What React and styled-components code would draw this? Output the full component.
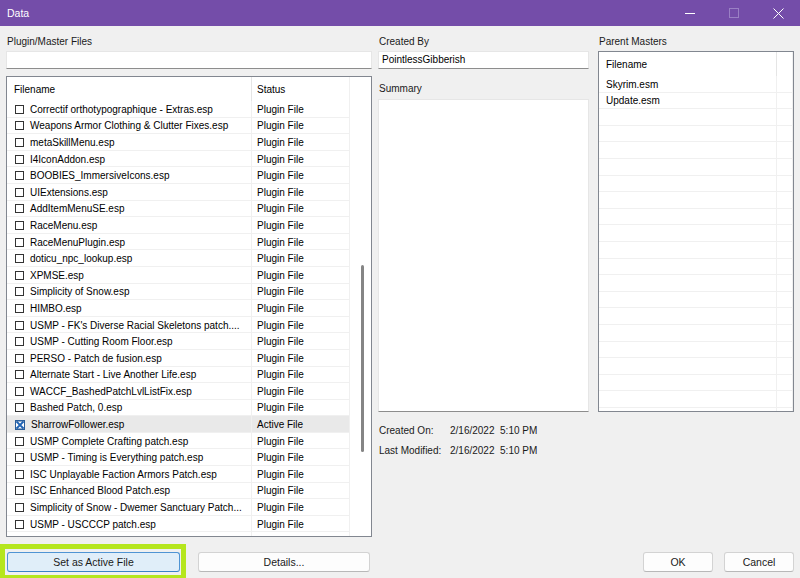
import React from "react";
import styled, { createGlobalStyle } from "styled-components";

const GlobalStyle = createGlobalStyle`
  html, body {
    margin: 0;
    padding: 0;
    background: #f0f0f0;
  }
  body {
    font-family: "Liberation Sans", Arial, sans-serif;
    font-size: 10px;
    color: #000;
  }
  * { box-sizing: border-box; }
`;

const plugins = [
  "Correctif orthotypographique - Extras.esp",
  "Weapons Armor Clothing & Clutter Fixes.esp",
  "metaSkillMenu.esp",
  "I4IconAddon.esp",
  "BOOBIES_ImmersiveIcons.esp",
  "UIExtensions.esp",
  "AddItemMenuSE.esp",
  "RaceMenu.esp",
  "RaceMenuPlugin.esp",
  "doticu_npc_lookup.esp",
  "XPMSE.esp",
  "Simplicity of Snow.esp",
  "HIMBO.esp",
  "USMP - FK's Diverse Racial Skeletons patch....",
  "USMP - Cutting Room Floor.esp",
  "PERSO - Patch de fusion.esp",
  "Alternate Start - Live Another Life.esp",
  "WACCF_BashedPatchLvlListFix.esp",
  "Bashed Patch, 0.esp",
  "SharrowFollower.esp",
  "USMP Complete Crafting patch.esp",
  "USMP - Timing is Everything patch.esp",
  "ISC Unplayable Faction Armors Patch.esp",
  "ISC Enhanced Blood Patch.esp",
  "Simplicity of Snow - Dwemer Sanctuary Patch...",
  "USMP - USCCCP patch.esp",
  "",
];

const ACTIVE = "SharrowFollower.esp";
const masters = ["Skyrim.esm", "Update.esm"];

// WINDOW FRAME
const Window = styled.div`
  width: 800px;
  height: 578px;
  background: #f0f0f0;
  overflow: hidden;
  display: flex;
  flex-direction: column;
`;

const TitleBar = styled.div`
  height: 26px;
  flex-shrink: 0;
  background: #744da9;
  color: #fff;
  display: flex;
  align-items: center;
  padding-left: 7px;
  font-size: 10.5px;
`;

const Caption = styled.div`
  flex: 1;
`;

const CaptionButton = styled.div`
  width: 44px;
  height: 26px;
  display: flex;
  align-items: center;
  justify-content: center;
`;

const MinGlyph = styled.div`
  width: 10px;
  height: 1px;
  background: #fff;
`;

const MaxGlyph = styled.div`
  width: 10px;
  height: 10px;
  border: 1px solid #9a80c4;
`;

// BODY
const Body = styled.div`
  display: flex;
  padding: 9px 6px 0 6px;
`;

const Column = styled.div`
  width: ${(p) => p.$width}px;
  margin-left: ${(p) => p.$offset || 0}px;
  display: flex;
  flex-direction: column;
`;

const Label = styled.div`
  height: 14px;
  line-height: 14px;
  padding-left: 1px;
  color: #1a1a1a;
  margin-top: ${(p) => p.$top || 0}px;
`;

const TextBox = styled.div`
  margin-top: 2px;
  height: 18px;
  background: #fff;
  border: 1px solid #e6e6e6;
  border-bottom-color: #8d8d8d;
  padding-left: 3px;
  line-height: 16px;
`;

const SummaryBox = styled.div`
  margin-top: 3px;
  height: 313px;
  background: #fff;
  border: 1px solid #e6e6e6;
  border-bottom-color: #8d8d8d;
`;

const InfoGrid = styled.div`
  margin-top: 9px;
  display: grid;
  grid-template-columns: 71px auto;
  line-height: 20px;
  padding-left: 1px;
  color: #1a1a1a;
  white-space: pre;
`;

// LIST VIEWS
const ListBox = styled.div`
  margin-top: ${(p) => p.$top}px;
  height: ${(p) => p.$height}px;
  background: #fff;
  border: 1px solid #828790;
  display: flex;
  overflow: hidden;
`;

const Table = styled.div`
  width: ${(p) => p.$width}px;
  flex-shrink: 0;
  display: flex;
  flex-direction: column;
  border-right: 1px solid #f0f0f0;
`;

const HeaderRow = styled.div`
  height: 24px;
  flex-shrink: 0;
  display: grid;
  grid-template-columns: ${(p) => p.$cols};
  align-items: stretch;
`;

const HeaderCell = styled.div`
  display: flex;
  align-items: center;
  padding-left: ${(p) => p.$pad}px;
  border-right: 1px solid #e5e5e5;
  &:last-child { border-right: none; }
`;

const Row = styled.div`
  height: 16.6px;
  flex-shrink: 0;
  display: grid;
  grid-template-columns: ${(p) => p.$cols};
  border-bottom: 1px solid #f0f0f0;
  background: ${(p) => (p.$selected ? "#e9e9e9" : "#fff")};
`;

const NameCell = styled.div`
  display: flex;
  align-items: center;
  padding-left: ${(p) => p.$pad}px;
  padding-top: 1px;
  gap: 6px;
  white-space: nowrap;
  overflow: hidden;
  border-right: 1px solid #f0f0f0;
`;

const StatusCell = styled.div`
  display: flex;
  align-items: center;
  padding-left: 5px;
  padding-top: 1px;
  white-space: nowrap;
`;

const Box = styled.span`
  width: 9px;
  height: 9px;
  flex-shrink: 0;
  border: 1px solid #333;
  background: #fff;
`;

const ScrollTrack = styled.div`
  flex: 1;
`;

const Thumb = styled.div`
  margin: 188px 0 0 11px;
  width: 3px;
  height: 187px;
  border-radius: 2px;
  background: #858585;
`;

// FOOTER
const Footer = styled.div`
  margin-top: 7px;
  display: flex;
  align-items: center;
  padding-right: 6px;
`;

const Highlight = styled.div`
  border: 5px solid #b5e61d;
  padding: 3px 1px 3px 2px;
`;

const Button = styled.button`
  width: ${(p) => p.$width}px;
  height: 20px;
  margin-left: ${(p) => p.$offset || 0}px;
  padding: 0;
  font-family: inherit;
  font-size: 10.5px;
  color: #1a1a1a;
  border-radius: 3px;
  border: 1px solid ${(p) => (p.$primary ? "#4f94d4" : "#d3d3d3")};
  border-bottom-color: ${(p) => (p.$primary ? "#3b82c8" : "#b8b8b8")};
  background: ${(p) => (p.$primary ? "#e0eef9" : "#fdfdfd")};
`;

const Spacer = styled.div`
  flex: 1;
`;

const CheckMark = () => (
  <svg width="10" height="10" viewBox="0 0 10 10" style={{ flexShrink: 0 }}>
    <rect x="0.5" y="0.5" width="9" height="9" fill="#fff" stroke="#2b5d99" />
    <path d="M1.5 1.5 L8.5 8.5 M8.5 1.5 L1.5 8.5" stroke="#1f63b5" strokeWidth="1.8" />
    <path d="M0.5 0.8 H9.5 M0.5 9.2 H9.5" stroke="#2b5d99" strokeWidth="1.3" />
  </svg>
);

const CloseGlyph = () => (
  <svg width="11" height="11" viewBox="0 0 11 11">
    <path d="M0.5 0.5 L10.5 10.5 M10.5 0.5 L0.5 10.5" stroke="#fff" strokeWidth="1" />
  </svg>
);

const PluginRow = ({ name }) => {
  const active = name === ACTIVE;
  return (
    <Row $cols="245px 1fr" $selected={active}>
      <NameCell $pad={8}>
        {name && (active ? <CheckMark /> : <Box />)}
        {name}
      </NameCell>
      <StatusCell>{name && (active ? "Active File" : "Plugin File")}</StatusCell>
    </Row>
  );
};

export default function App() {
  const masterRows = Array.from({ length: 21 }, (_, i) => masters[i] || "");
  return (
    <Window>
      <GlobalStyle />
      <TitleBar>
        <Caption>Data</Caption>
        <CaptionButton><MinGlyph /></CaptionButton>
        <CaptionButton><MaxGlyph /></CaptionButton>
        <CaptionButton><CloseGlyph /></CaptionButton>
      </TitleBar>

      <Body>
        <Column $width={366}>
          <Label>Plugin/Master Files</Label>
          <TextBox />
          <ListBox $top={7} $height={461}>
            <Table $width={343}>
              <HeaderRow $cols="245px 1fr">
                <HeaderCell $pad={7}>Filename</HeaderCell>
                <HeaderCell $pad={5}>Status</HeaderCell>
              </HeaderRow>
              {plugins.map((p, i) => (
                <PluginRow key={i} name={p} />
              ))}
            </Table>
            <ScrollTrack>
              <Thumb />
            </ScrollTrack>
          </ListBox>
        </Column>

        <Column $width={211} $offset={6}>
          <Label>Created By</Label>
          <TextBox>PointlessGibberish</TextBox>
          <Label $top={13}>Summary</Label>
          <SummaryBox />
          <InfoGrid>
            <span>Created On:</span>
            <span>2/16/2022  5:10 PM</span>
            <span>Last Modified:</span>
            <span>2/16/2022  5:10 PM</span>
          </InfoGrid>
        </Column>

        <Column $width={196} $offset={9}>
          <Label>Parent Masters</Label>
          <ListBox $top={2} $height={361}>
            <Table $width={194}>
              <HeaderRow $cols="178px 1fr">
                <HeaderCell $pad={7}>Filename</HeaderCell>
                <HeaderCell $pad={5} />
              </HeaderRow>
              {masterRows.map((m, i) => (
                <Row key={i} $cols="178px 1fr">
                  <NameCell $pad={7}>{m}</NameCell>
                  <StatusCell />
                </Row>
              ))}
            </Table>
          </ListBox>
        </Column>
      </Body>

      <Footer>
        <Highlight>
          <Button $primary $width={173}>Set as Active File</Button>
        </Highlight>
        <Button $width={172} $offset={12}>Details...</Button>
        <Spacer />
        <Button $width={70}>OK</Button>
        <Button $width={70} $offset={11}>Cancel</Button>
      </Footer>
    </Window>
  );
}
